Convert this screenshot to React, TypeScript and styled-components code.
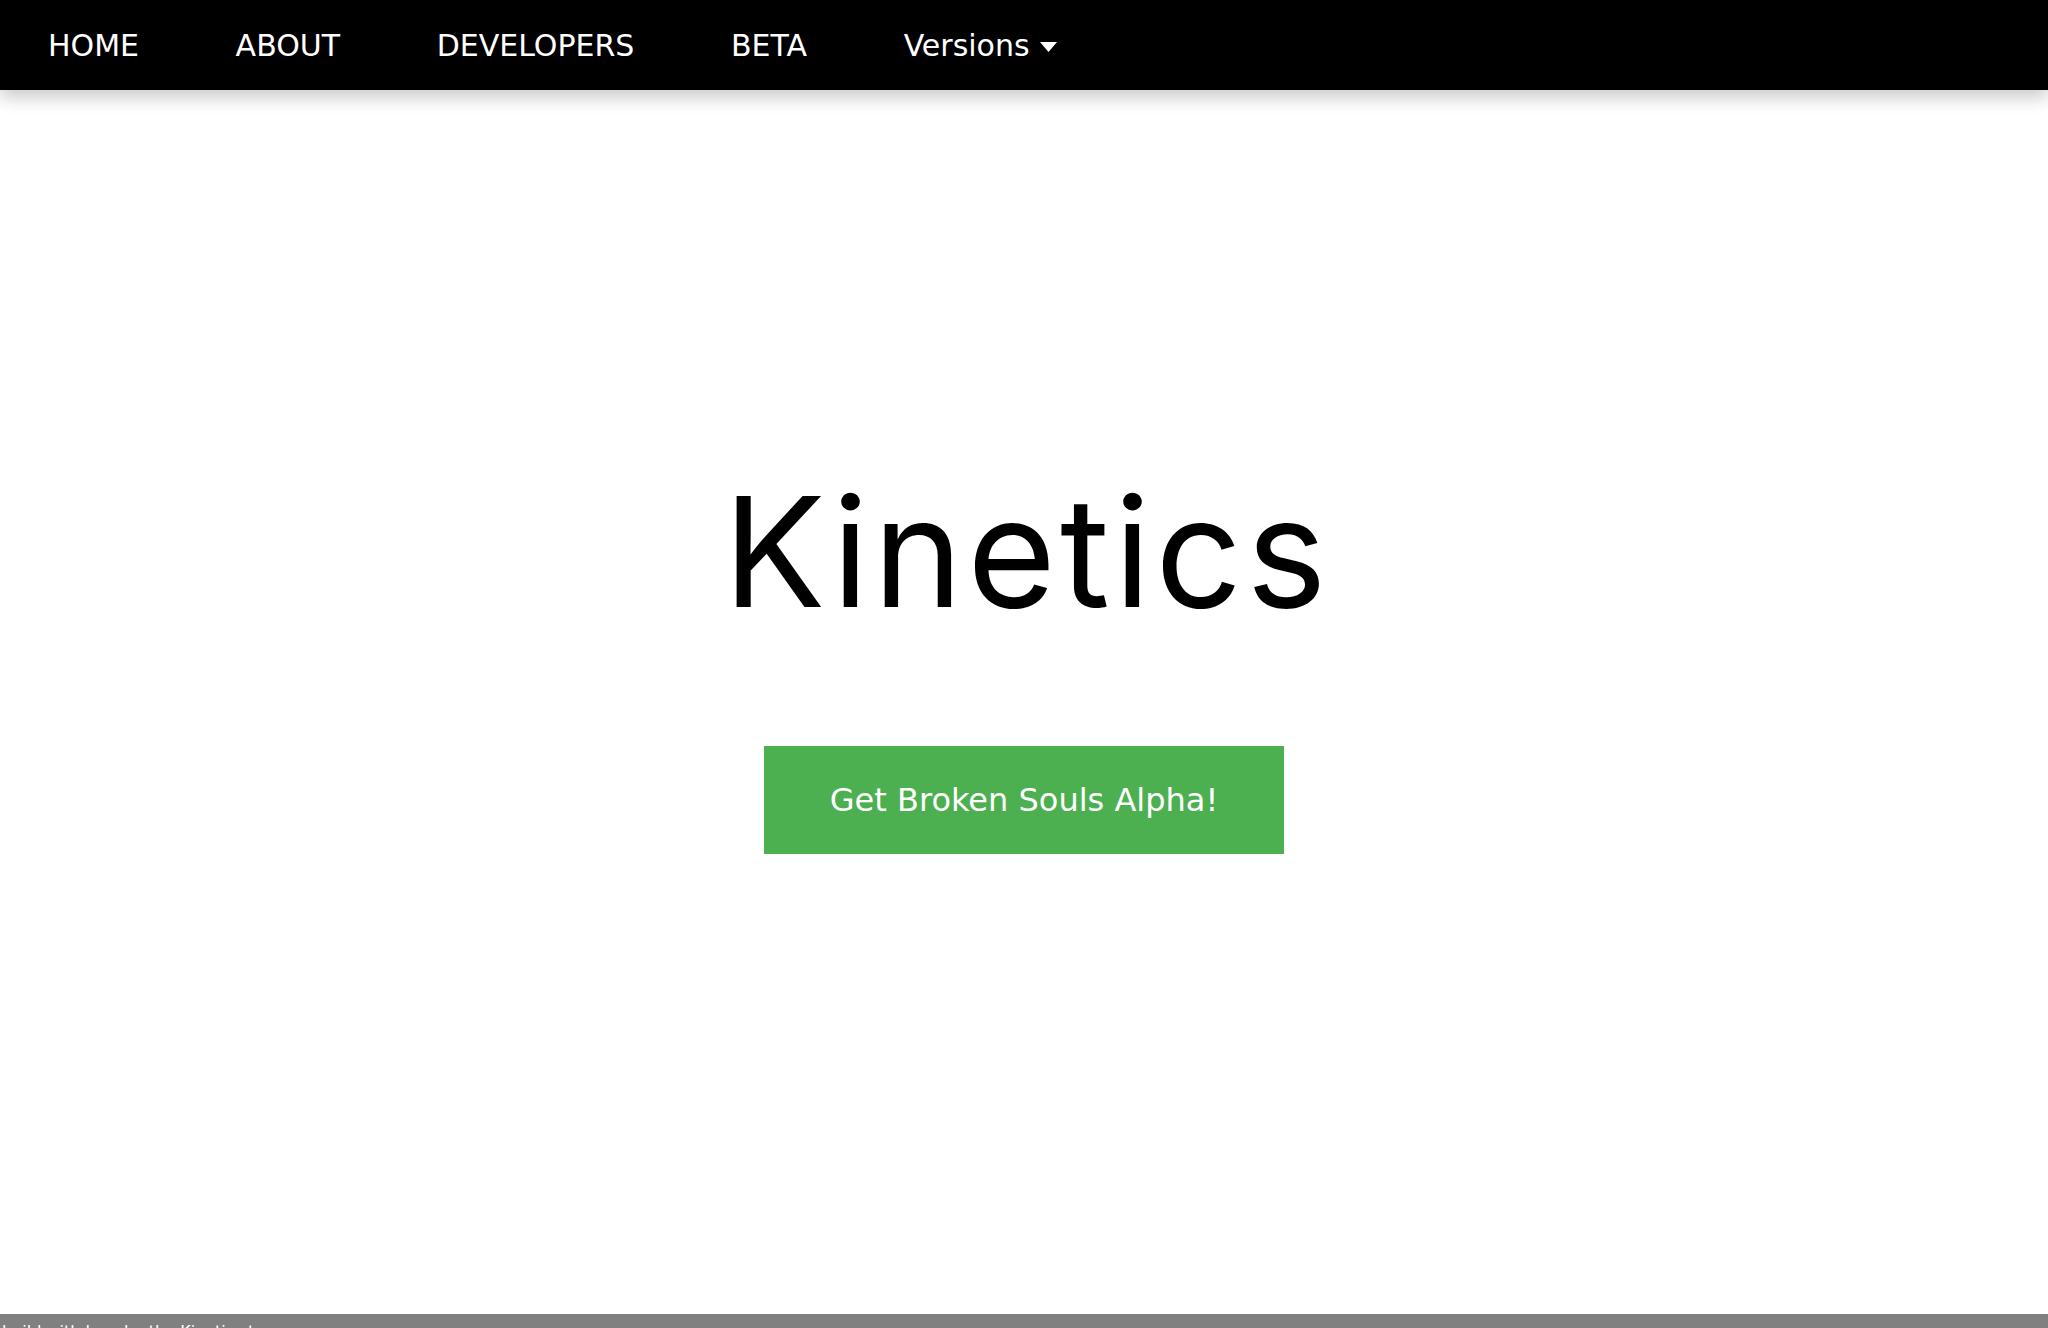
import React from "react";
import styled, { createGlobalStyle } from "styled-components";

const GlobalStyle = createGlobalStyle`
  html, body {
    margin: 0;
    padding: 0;
    background: #ffffff;
    font-family: "DejaVu Sans", Verdana, sans-serif;
  }
  * { box-sizing: border-box; }
`;

const Page = styled.div`
  display: flex;
  flex-direction: column;
  min-height: 100vh;
`;

const NavBar = styled.nav`
  display: flex;
  align-items: center;
  height: 90px;
  background: #000000;
  box-shadow: 0 8px 16px 0 rgba(0, 0, 0, 0.2);
  position: relative;
  z-index: 2;
`;

const NavLink = styled.a`
  display: flex;
  align-items: center;
  height: 100%;
  padding: 0 48.3px;
  color: #ffffff;
  font-family: "DejaVu Sans", Verdana, sans-serif;
  font-size: 30px;
  text-decoration: none;
  white-space: pre;
  &:first-child {
    padding-left: 48px;
  }
`;

const Caret = styled.svg`
  width: 17px;
  height: 10px;
  margin-left: 10px;
  margin-top: 3px;
`;

const Hero = styled.main`
  display: flex;
  flex-direction: column;
  align-items: center;
  height: 1224px;
  padding-top: 386px;
`;

const Title = styled.h1`
  margin: 0 0 0 6px;
  font-family: Inter, "Open Sans", sans-serif;
  font-weight: 400;
  font-size: 152px;
  line-height: 1;
  color: #000000;
  letter-spacing: 4.3px;
`;

const CtaButton = styled.a`
  display: inline-block;
  margin-top: 118px;
  padding: 35px 66px;
  background: #4caf50;
  color: #ffffff;
  font-family: "DejaVu Sans", Verdana, sans-serif;
  font-size: 32px;
  text-decoration: none;
`;

const Footer = styled.footer`
  background: #808080;
  color: #ffffff;
  padding: 8px 2px 20px;
  font-family: "DejaVu Sans", Verdana, sans-serif;
  font-size: 16px;
`;

export default function App() {
  return (
    <>
      <GlobalStyle />
      <Page>
        <NavBar>
          <NavLink href="#">HOME</NavLink>
          <NavLink href="#">ABOUT</NavLink>
          <NavLink href="#">DEVELOPERS</NavLink>
          <NavLink href="#">BETA</NavLink>
          <NavLink href="#">
            Versions
            <Caret viewBox="0 0 17 10">
              <path d="M0 0 H17 L8.5 10 Z" fill="#ffffff" />
            </Caret>
          </NavLink>
        </NavBar>
        <Hero>
          <Title>Kinetics</Title>
          <CtaButton href="#">Get Broken Souls Alpha!</CtaButton>
        </Hero>
        <Footer>build with love by the Kinetics team</Footer>
      </Page>
    </>
  );
}
